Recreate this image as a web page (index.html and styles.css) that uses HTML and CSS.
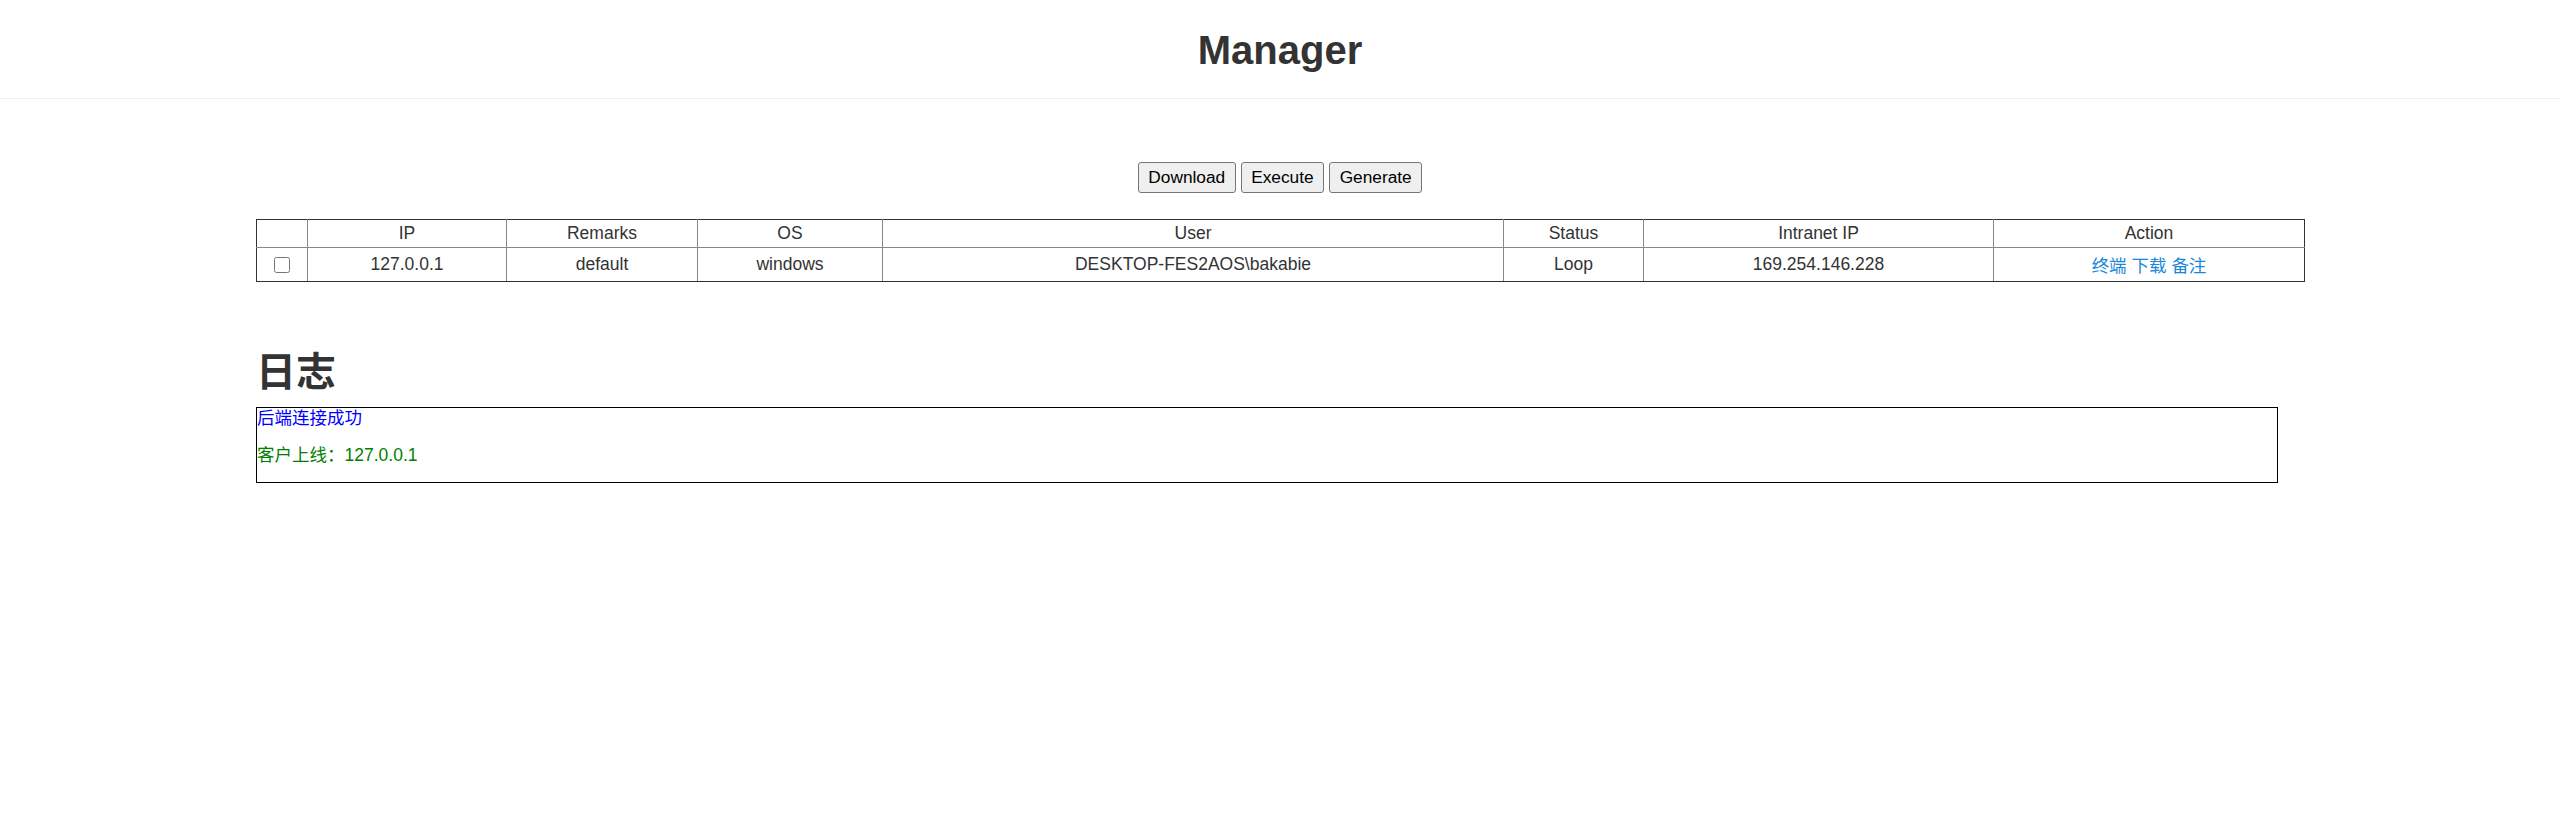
FILE: index.html
```html
<!DOCTYPE html>
<html lang="zh-CN">
<head>
<meta charset="utf-8">
<title>Manager</title>
<link rel="stylesheet" href="styles.css">
</head>
<body>
<header class="topbar">
  <h1 class="title">Manager</h1>
</header>
<main class="content">
  <div class="toolbar">
    <button class="btn">Download</button>
    <button class="btn">Execute</button>
    <button class="btn">Generate</button>
  </div>
  <table class="clients">
    <colgroup>
      <col class="c-check">
      <col class="c-ip">
      <col class="c-remarks">
      <col class="c-os">
      <col class="c-user">
      <col class="c-status">
      <col class="c-intranet">
      <col class="c-action">
    </colgroup>
    <thead>
      <tr class="head-row">
        <th></th>
        <th>IP</th>
        <th>Remarks</th>
        <th>OS</th>
        <th>User</th>
        <th>Status</th>
        <th>Intranet IP</th>
        <th>Action</th>
      </tr>
    </thead>
    <tbody>
      <tr class="body-row">
        <td><input type="checkbox" class="check"></td>
        <td>127.0.0.1</td>
        <td>default</td>
        <td>windows</td>
        <td>DESKTOP-FES2AOS\bakabie</td>
        <td>Loop</td>
        <td>169.254.146.228</td>
        <td><a class="act" href="#">终端</a> <a class="act" href="#">下载</a> <a class="act" href="#">备注</a></td>
      </tr>
    </tbody>
  </table>
  <section class="log-section">
    <h2 class="log-title">日志</h2>
    <div class="log-box">
      <p class="log-line log-info">后端连接成功</p>
      <p class="log-line log-ok">客户上线：127.0.0.1</p>
    </div>
  </section>
</main>
</body>
</html>
```
FILE: styles.css
```css
* { box-sizing: border-box; }

html, body {
  margin: 0;
  padding: 0;
  background: #ffffff;
}

body {
  font-family: "Liberation Sans", Arial, "Noto Sans CJK SC", sans-serif;
  font-size: 17.5px;
  color: #333333;
}

.topbar {
  padding: 27px 0 25px;
  border-bottom: 1px solid #eeeeee;
}

.title {
  margin: 0;
  font-size: 40px;
  line-height: 46px;
  font-weight: bold;
  text-align: center;
  color: #333333;
}

.content {
  width: 80%;
  margin: 0 auto;
  padding-top: 63px;
}

.toolbar {
  display: flex;
  justify-content: center;
  gap: 5px;
  margin-bottom: 26px;
}

.btn {
  height: 31px;
  padding: 0 9.5px;
  font-family: "Liberation Sans", Arial, sans-serif;
  font-size: 17.3px;
  color: #000000;
  background: #efefef;
  border: 1px solid #767676;
  border-radius: 3px;
}

.clients {
  width: 100%;
  table-layout: fixed;
  border-collapse: collapse;
}

.c-check { width: 51px; }
.c-ip { width: 199px; }
.c-remarks { width: 191px; }
.c-os { width: 185px; }
.c-user { width: 621px; }
.c-status { width: 140px; }
.c-intranet { width: 350px; }
.c-action { width: 311px; }

.clients th,
.clients td {
  border: 1px solid #888888;
  padding: 0;
  text-align: center;
  vertical-align: middle;
  font-weight: normal;
  color: #333333;
  white-space: nowrap;
}

.head-row th { border-top-color: #333333; }
.body-row td { border-bottom-color: #333333; }
.clients th:first-child,
.clients td:first-child { border-left-color: #333333; }
.clients th:last-child,
.clients td:last-child { border-right-color: #333333; }

.head-row { height: 28px; }
.body-row { height: 34px; }

.check {
  width: 16px;
  height: 16px;
  margin: 0;
  vertical-align: middle;
}

.act {
  color: #1a87d8;
  text-decoration: none;
  font-family: "Noto Sans CJK SC", sans-serif;
}

.log-title {
  margin: 64px 0 15px;
  font-family: "Noto Sans CJK SC", sans-serif;
  font-size: 40px;
  line-height: 46px;
  font-weight: bold;
  color: #333333;
}

.log-box {
  width: 98.75%;
  border: 1px solid #000000;
}

.log-line {
  margin: 0 0 16px;
  line-height: 21px;
  font-family: "Liberation Sans", Arial, "Noto Sans CJK SC", sans-serif;
}

.log-info { color: #0000ff; }
.log-ok { color: #008000; }
```
